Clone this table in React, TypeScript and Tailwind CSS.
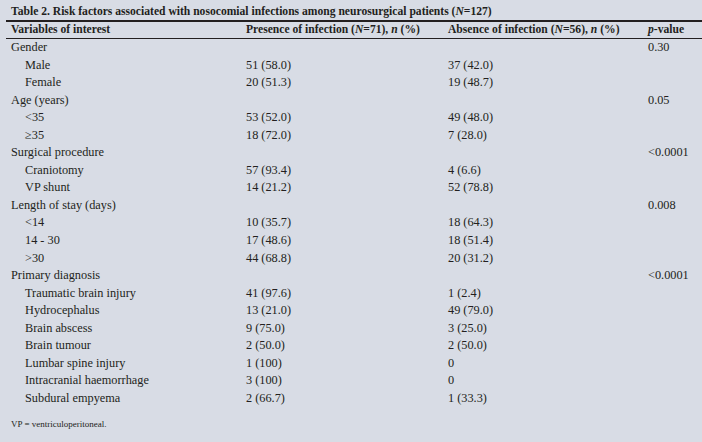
type Row = { label: string; sub?: boolean; yes?: string; no?: string; p?: string };

const rows: Row[] = [
  { label: 'Gender', p: '0.30' },
  { label: 'Male', sub: true, yes: '51 (58.0)', no: '37 (42.0)' },
  { label: 'Female', sub: true, yes: '20 (51.3)', no: '19 (48.7)' },
  { label: 'Age (years)', p: '0.05' },
  { label: '<35', sub: true, yes: '53 (52.0)', no: '49 (48.0)' },
  { label: '≥35', sub: true, yes: '18 (72.0)', no: '7 (28.0)' },
  { label: 'Surgical procedure', p: '<0.0001' },
  { label: 'Craniotomy', sub: true, yes: '57 (93.4)', no: '4 (6.6)' },
  { label: 'VP shunt', sub: true, yes: '14 (21.2)', no: '52 (78.8)' },
  { label: 'Length of stay (days)', p: '0.008' },
  { label: '<14', sub: true, yes: '10 (35.7)', no: '18 (64.3)' },
  { label: '14 - 30', sub: true, yes: '17 (48.6)', no: '18 (51.4)' },
  { label: '>30', sub: true, yes: '44 (68.8)', no: '20 (31.2)' },
  { label: 'Primary diagnosis', p: '<0.0001' },
  { label: 'Traumatic brain injury', sub: true, yes: '41 (97.6)', no: '1 (2.4)' },
  { label: 'Hydrocephalus', sub: true, yes: '13 (21.0)', no: '49 (79.0)' },
  { label: 'Brain abscess', sub: true, yes: '9 (75.0)', no: '3 (25.0)' },
  { label: 'Brain tumour', sub: true, yes: '2 (50.0)', no: '2 (50.0)' },
  { label: 'Lumbar spine injury', sub: true, yes: '1 (100)', no: '0' },
  { label: 'Intracranial haemorrhage', sub: true, yes: '3 (100)', no: '0' },
  { label: 'Subdural empyema', sub: true, yes: '2 (66.7)', no: '1 (33.3)' },
];

const cols = 'grid grid-cols-[240px_202px_200px_1fr]';

export default function App() {
  return (
    <div className="w-[702px] h-[442px] overflow-hidden bg-[#d8dce5] pl-[6px] font-['Liberation_Serif',serif] text-[12.3px] text-[#231f20]">
      {/* caption */}
      <div className="h-[20px] pl-[5px] pt-[4px] leading-[15px] text-[11.6px] font-bold whitespace-nowrap">
        Table 2. Risk factors associated with nosocomial infections among neurosurgical patients (<i>N</i>=127)
      </div>

      {/* header */}
      <div className={`${cols} h-[19px] border-t-2 border-b border-[#231f20] items-center text-[11.6px] font-bold leading-[16px] whitespace-nowrap`}>
        <div className="pl-[5px]">Variables of interest</div>
        <div>
          Presence of infection (<i>N</i>=71), <i>n</i> (%)
        </div>
        <div>
          Absence of infection (<i>N</i>=56), <i>n</i> (%)
        </div>
        <div>
          <i>p</i>-value
        </div>
      </div>

      {/* body */}
      <div className="flex flex-col">
        {rows.map((r) => (
          <div key={r.label} className={`${cols} h-[17.55px] leading-[17.55px] whitespace-nowrap`}>
            <div className={r.sub ? 'pl-[19px]' : 'pl-[5px]'}>{r.label}</div>
            <div>{r.yes}</div>
            <div>{r.no}</div>
            <div>{r.p}</div>
          </div>
        ))}
      </div>

      <div className="mt-[10px] pl-[5px] text-[9px] leading-[14px]">VP = ventriculoperitoneal.</div>
    </div>
  );
}
